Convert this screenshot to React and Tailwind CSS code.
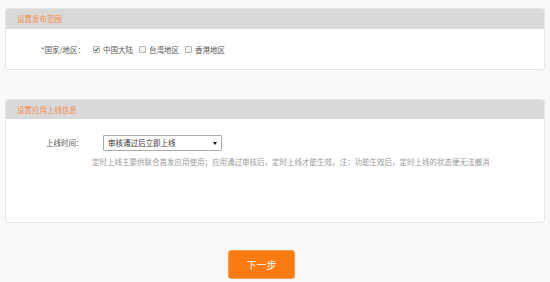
import React from "react";

const font = { fontFamily: '"Noto Sans CJK SC", "Noto Sans", sans-serif' };

function Box({ checked }) {
  return (
    <span className="relative inline-block w-[7px] h-[7px] border border-[#b5b5b5] rounded-[1px] bg-[#f4f4f4] shrink-0">
      {checked && (
        <svg viewBox="0 0 8 8" className="absolute left-0 top-0 w-[5px] h-[5px]">
          <path d="M1 4.2 L3.2 6.3 L7 1.5" fill="none" stroke="#222" strokeWidth="1.6" />
        </svg>
      )}
    </span>
  );
}

export default function App() {
  return (
    <div className="w-[550px] h-[282px] bg-[#f9f9f9] pt-[8px] px-[5px] overflow-hidden" style={font}>
      <div className="h-[62px] bg-white border border-[#e6e6e6] rounded-[3px] overflow-hidden">
        <div className="h-[20px] bg-[#d9d9d9] pl-[11px] flex items-center text-[7.5px] text-[#f5894a]">
          设置发布范围
        </div>
        <div className="h-[41px] flex items-center pl-[35px] text-[7.5px] text-[#555]">
          <span className="w-[52px]">*国家/地区：</span>
          <Box checked />
          <span className="ml-[3px] w-[36px]">中国大陆</span>
          <Box />
          <span className="ml-[3px] w-[36px]">台湾地区</span>
          <Box />
          <span className="ml-[3px]">香港地区</span>
        </div>
      </div>

      <div className="mt-[29px] h-[124px] bg-white border border-[#e6e6e6] rounded-[3px] overflow-hidden">
        <div className="h-[19px] bg-[#d9d9d9] pl-[11px] flex items-center text-[7.5px] text-[#f5894a]">
          设置应用上线信息
        </div>
        <div className="pt-[16px] pl-[40px] text-[7.5px]">
          <div className="flex items-center">
            <span className="w-[57px] text-[#555]">上线时间：</span>
            <div className="w-[119px] h-[16px] border border-[#aaa] rounded-[1px] bg-white flex items-center pl-[4px] pr-[4px] text-[#333]">
              <span className="flex-1">审核通过后立即上线</span>
              <span className="w-0 h-0 border-l-[2px] border-r-[2px] border-t-[3px] border-l-transparent border-r-transparent border-t-[#111]"></span>
            </div>
          </div>
          <div className="mt-[5px] ml-[46px] text-[#9a9a9a] whitespace-nowrap">
            定时上线主要供联合首发应用使用；应用通过审核后，定时上线才能生效。注：功能生效后，定时上线的状态便无法撤消
          </div>
        </div>
      </div>

      <div className="mt-[27px] pl-[223px]">
        <button className="w-[67px] h-[29px] bg-[#fc7c14] border border-[#f59a4a] rounded-[3px] text-white text-[10px] flex items-center justify-center">
          下一步
        </button>
      </div>
    </div>
  );
}
